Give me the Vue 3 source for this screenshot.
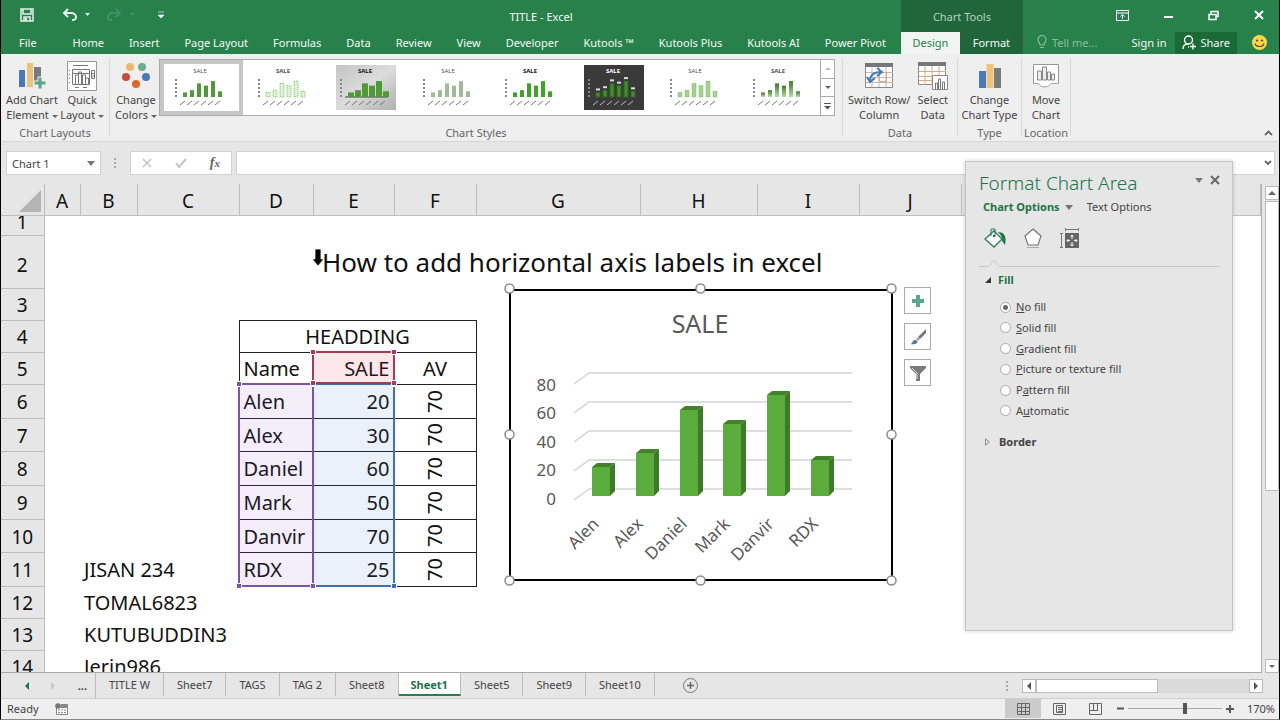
<script setup>
import { ref } from 'vue'

const menuTabs = ['File', 'Home', 'Insert', 'Page Layout', 'Formulas', 'Data', 'Review', 'View', 'Developer', 'Kutools ™', 'Kutools Plus', 'Kutools AI', 'Power Pivot']

const bars = [
  { name: 'Alen', value: 20 },
  { name: 'Alex', value: 30 },
  { name: 'Daniel', value: 60 },
  { name: 'Mark', value: 50 },
  { name: 'Danvir', value: 70 },
  { name: 'RDX', value: 25 }
]
const ticks = [80, 60, 40, 20, 0]

// chart geometry
const BASE = 496
const barX = (i) => Math.round(592 + i * 43.8)
const barY = (v) => Math.round(BASE - v * 1.44)
const tickY = (v) => Math.round(489 - v * 1.45)
const labelY = (v) => Math.round(505 - v * 1.43)

const styles = ['plain', 'hatch', 'gray', 'soft', 'bold', 'dark', 'pale', 'fade']
const selectedStyle = ref('plain')

const columns = ['A', 'B', 'C', 'D', 'E', 'F', 'G', 'H', 'I', 'J', '']
const extraRows = [
  { n: 12, text: 'TOMAL6823' },
  { n: 13, text: 'KUTUBUDDIN3' },
  { n: 14, text: 'Jerin986' }
]

const sheets = ['TITLE W', 'Sheet7', 'TAGS', 'TAG 2', 'Sheet8', 'Sheet1', 'Sheet5', 'Sheet9', 'Sheet10']
const activeSheet = ref('Sheet1')

const fills = [
  { id: 'none', pre: '', key: 'N', post: 'o fill' },
  { id: 'solid', pre: '', key: 'S', post: 'olid fill' },
  { id: 'gradient', pre: '', key: 'G', post: 'radient fill' },
  { id: 'picture', pre: '', key: 'P', post: 'icture or texture fill' },
  { id: 'pattern', pre: 'P', key: 'a', post: 'ttern fill' },
  { id: 'auto', pre: 'A', key: 'u', post: 'tomatic' }
]
const fill = ref('none')
const nameBox = ref('Chart 1')
const formula = ref('')
const zoom = ref(170)
</script>

<template>
  <div class="excel">
    <header class="top">
      <div class="title-row">
        <div class="quick">
          <button class="flat" aria-label="Save">
            <svg width="14" height="14" viewBox="0 0 14 14"><path d="M1 1h12v12H1zM3 1v5h8V1M4 13V9h6v4" fill="none" stroke="#e4f2e8" stroke-width="1.5" /><path d="M5 10h2v3H5z" fill="#e4f2e8" /></svg>
          </button>
          <button class="flat undo" aria-label="Undo">
            <svg width="28" height="14" viewBox="0 0 28 14"><path d="M6 1L2 5l4 4M2 5h7c3 0 5 2 5 4s-2 3-4 3" fill="none" stroke="#e4f2e8" stroke-width="2" /><path d="M23 5h5l-2.500 3z" fill="#e4f2e8" /></svg>
          </button>
          <button class="flat redo" aria-label="Redo">
            <svg width="28" height="14" viewBox="0 0 28 14"><path d="M9 1l4 4-4 4M13 5H6C3 5 1 7 1 9s2 3 4 3" fill="none" stroke="#439264" stroke-width="2" /><path d="M23 5h5l-2.500 3z" fill="#439264" /></svg>
          </button>
          <button class="flat" aria-label="Customize">
            <svg width="6" height="8" viewBox="0 0 6 8"><path d="M0 1h6M0 4h6L3 7z" fill="#fff" stroke="#fff" stroke-width="0.600" /></svg>
          </button>
        </div>
        <div class="doc-title">TITLE - Excel</div>
      </div>
      <div class="context-title">Chart Tools</div>
      <div class="window-buttons">
        <button class="flat" aria-label="Ribbon display">
          <svg width="13" height="11" viewBox="0 0 13 11"><path d="M.5.5h12v10H.5zM.5 3h12M6.500 9V5M4.500 6.500l2-2 2 2" fill="none" stroke="#fff" /></svg>
        </button>
        <button class="flat" aria-label="Minimize">
          <svg width="9" height="11" viewBox="0 0 9 11"><path d="M0 7h9" stroke="#fff" stroke-width="2" /></svg>
        </button>
        <button class="flat" aria-label="Restore">
          <svg width="11" height="11" viewBox="0 0 11 11"><path d="M1 4.500h7v5H1zM3 4V1.500h7v5H8" fill="none" stroke="#fff" stroke-width="1.500" /></svg>
        </button>
        <button class="flat" aria-label="Close">
          <svg width="10" height="10" viewBox="0 0 10 10"><path d="M1 1l8 8M9 1L1 9" stroke="#fff" stroke-width="2" /></svg>
        </button>
      </div>
      <nav class="tabs">
        <button v-for="t in menuTabs" :key="t" class="tab">{{ t }}</button>
      </nav>
      <div class="context-tabs">
        <button class="tab design">Design</button>
        <button class="tab format">Format</button>
      </div>
      <div class="account">
        <button class="flat tell">
          <svg width="10" height="14" viewBox="0 0 10 14"><path d="M3 10C3 8 1 7 1 4.500a4 4 0 018 0C9 7 7 8 7 10zM3 12.500h4" fill="none" stroke="#85c09b" stroke-width="1.200" /></svg>
          Tell me...
        </button>
        <button class="flat sign">Sign in</button>
        <button class="flat share">
          <svg width="14" height="15" viewBox="0 0 14 15"><circle cx="6.500" cy="5" r="4" fill="none" stroke="#fff" stroke-width="1.400" /><path d="M1 14c0-3 2-5 5-5M6 12h1M8 11.500h6M11 8.500v6" fill="none" stroke="#fff" stroke-width="1.400" /></svg>
          Share
        </button>
        <button class="flat smile" aria-label="Feedback">
          <svg width="15" height="15" viewBox="0 0 15 15"><circle cx="7.500" cy="7.500" r="7.500" fill="#fbd849" /><circle cx="5" cy="5.500" r="1.100" fill="#5b4a17" /><circle cx="10" cy="5.500" r="1.100" fill="#5b4a17" /><path d="M3 8.500c1 4 8 4 9 0" fill="none" stroke="#5b4a17" stroke-width="1.200" /></svg>
        </button>
      </div>
    </header>

    <section class="ribbon">
      <div class="group layouts">
        <div class="tools">
          <button class="tool">
            <svg width="28" height="28" viewBox="0 0 28 28"><path d="M1 8h6v17H1z" fill="#4a7ab5" /><path d="M9 1h6v24H9z" fill="#ebc47a" /><path d="M16 5h7v15h-7z" fill="#7b7b7b" /><path d="M20 15h4v4h4v4h-4v4h-4v-4h-4v-4h4z" fill="#5ba58c" stroke="#efefef" /></svg>
            <span>Add Chart<br>Element <i class="caret"></i></span>
          </button>
          <button class="tool">
            <svg width="30" height="30" viewBox="0 0 30 30"><path d="M.5.5h29v29H.5z" fill="#fff" stroke="#999" /><path d="M6 4.500h15M5.500 8.500h17v15h-17zM5.500 12.500h17M8.500 23V14h3v9M11.500 23V11h3v12M15.500 23v-9h3v9M18.500 23v-6h3v6M24.500 9.500h3v8h-3zM24.500 12.500h3M24.500 15h3M8 26.500h4M16 26.500h4" fill="none" stroke="#777" /><path d="M2.500 9v16" stroke="#777" stroke-dasharray="1 3" /></svg>
            <span>Quick<br>Layout <i class="caret"></i></span>
          </button>
        </div>
        <div class="group-name">Chart Layouts</div>
      </div>

      <div class="group chart-styles">
        <div class="tools">
          <button class="tool colors">
            <svg width="28" height="28" viewBox="0 0 28 28"><circle cx="8" cy="5" r="4" fill="#ebb86c" /><circle cx="20" cy="5" r="4" fill="#6bab90" /><circle cx="4" cy="15" r="4" fill="#c8483b" /><circle cx="24" cy="15" r="4" fill="#4a7ab5" /><circle cx="14" cy="22" r="4" fill="#d9682a" /></svg>
            <span>Change<br>Colors <i class="caret"></i></span>
          </button>
          <div class="gallery">
            <button v-for="s in styles" :key="s" class="thumb" :class="[s, { selected: s === selectedStyle }]" :aria-label="'Style ' + s" @click="selectedStyle = s">
              <svg width="60" height="45" viewBox="0 0 60 45">
                <defs>
                  <linearGradient id="fade-bar" x1="0" y1="0" x2="0" y2="1"><stop offset="0" stop-color="#3d7a2b" /><stop offset="1" stop-color="#b5dca6" /></linearGradient>
                  <linearGradient id="gray-paper" x1="0" y1="0" x2="1" y2="1"><stop offset="0" stop-color="#c4c4c4" /><stop offset="0.500" stop-color="#dcdcdc" /><stop offset="1" stop-color="#b0b0b0" /></linearGradient>
                </defs>
                <rect class="paper" width="60" height="45" />
                <text x="29" y="8" text-anchor="middle">SALE</text>
                <path class="axis" d="M5 14v20" />
                <path v-if="s === 'gray'" d="M9 32h43" stroke="#444" />
                <g v-for="(b, i) in bars" :key="b.name">
                  <rect class="bar" :x="12 + i * 7" :y="32 - b.value / 4.4" width="4" :height="b.value / 4.4" />
                  <path v-if="s === 'dark'" :d="`M${12 + i * 7} ${29 - b.value / 4.4}h4`" stroke="#ddd" stroke-width="2" />
                  <path class="cat" :d="`M${9 + i * 7} 40l5-4`" />
                </g>
              </svg>
            </button>
            <div class="gallery-nav">
              <button aria-label="Previous styles"><i class="up"></i></button>
              <button aria-label="Next styles"><i class="caret"></i></button>
              <button aria-label="More styles"><svg width="7" height="7" viewBox="0 0 7 7"><path d="M0 .5h7" stroke="#555" /><path d="M0 3h7L3.500 6.500z" fill="#555" /></svg></button>
            </div>
          </div>
        </div>
        <div class="group-name">Chart Styles</div>
      </div>

      <div class="group data">
        <div class="tools">
          <button class="tool">
            <svg width="28" height="26" viewBox="0 0 28 26"><path d="M.5.5h27v24H.5z" fill="#fff" stroke="#8a8a8a" /><path d="M0 0h28v4H0z" fill="#777" /><path d="M7 4v20M14 4v20M21 4v20M1 9.500h27M1 14.500h27M1 19.500h27" stroke="#bbb" /><path d="M14.500 9.500h7v9h-7z" fill="none" stroke="#e9a46a" /><path d="M5 18c0-6 4-9 11-9M12 5l5 4-5 4M2 14l3 5 5-4" fill="none" stroke="#4a7ab5" stroke-width="2" /></svg>
            <span>Switch Row/<br>Column</span>
          </button>
          <button class="tool">
            <svg width="30" height="28" viewBox="0 0 30 28"><path d="M.5.500h27v22H.5z" fill="#fff" stroke="#8a8a8a" /><path d="M0 0h28v4H0z" fill="#777" /><path d="M7 4v19M14 4v19M21 4v19M1 9.500h27M1 14.500h27M1 18.500h27" stroke="#e0a87c" /><path d="M14.500 13.500h15v14h-15z" fill="#fff" stroke="#888" /><path d="M17.500 27v-6h2v6M20.500 27V17h2v10M24.500 27v-7h2v7" fill="none" stroke="#777" /></svg>
            <span>Select<br>Data</span>
          </button>
        </div>
        <div class="group-name">Data</div>
      </div>

      <div class="group type">
        <div class="tools">
          <button class="tool">
            <svg width="22" height="26" viewBox="0 0 22 26"><path d="M0 8h7v17H0z" fill="#4a7ab5" /><path d="M7.500 1h7v24h-7z" fill="#ebc47a" /><path d="M15 5h7v20h-7z" fill="#7b7b7b" /></svg>
            <span>Change<br>Chart Type</span>
          </button>
        </div>
        <div class="group-name">Type</div>
      </div>

      <div class="group location">
        <div class="tools">
          <button class="tool">
            <svg width="26" height="26" viewBox="0 0 26 26"><path d="M.5 1.500h25v22H.5z" fill="#fff" stroke="#999" /><path d="M4.500 17V8h4v9zM9.500 17V4h4v13zM14.500 17V9h3v8zM18.500 17v-6h3v6z" fill="#eee" stroke="#888" /><path d="M0 21h6c2 3 5 3 8 2l4-3h8v6H0z" fill="#efefef" /><path d="M0 20.500h6c0 3 5 4 9 3l3-3h8" fill="none" stroke="#aaa" /></svg>
            <span>Move<br>Chart</span>
          </button>
        </div>
        <div class="group-name">Location</div>
      </div>
      <button class="flat collapse" aria-label="Collapse ribbon">
        <svg width="9" height="6" viewBox="0 0 9 6"><path d="M1 5l3.500-3.500L8 5" fill="none" stroke="#666" stroke-width="1.800" /></svg>
      </button>
    </section>

    <section class="formula-bar">
      <div class="name-box">
        <input v-model="nameBox" aria-label="Name box">
        <button class="flat" aria-label="Names"><i class="caret big"></i></button>
      </div>
      <span class="grip"></span>
      <div class="fx-box">
        <button class="flat" aria-label="Cancel"><svg width="10" height="10" viewBox="0 0 10 10"><path d="M1 1l8 8M9 1L1 9" stroke="#c4c4c4" stroke-width="1.500" /></svg></button>
        <button class="flat" aria-label="Enter"><svg width="12" height="10" viewBox="0 0 12 10"><path d="M1 5l3 4 7-8" fill="none" stroke="#c4c4c4" stroke-width="2" /></svg></button>
        <button class="flat fx" aria-label="Insert function">f<small>x</small></button>
      </div>
      <div class="formula-input">
        <input v-model="formula" aria-label="Formula">
        <button class="flat" aria-label="Expand"><svg width="8" height="6" viewBox="0 0 8 6"><path d="M1 1l3 3 3-3" fill="none" stroke="#666" stroke-width="1.800" /></svg></button>
      </div>
    </section>

    <main class="work">
      <div class="sheet">
        <table class="cells">
          <colgroup>
            <col class="w-head"><col class="w-a"><col class="w-b"><col class="w-c"><col class="w-d"><col class="w-e"><col class="w-f"><col class="w-g"><col class="w-h"><col class="w-c"><col class="w-c"><col>
          </colgroup>
          <thead>
            <tr>
              <th class="corner"><i></i></th>
              <th v-for="c in columns" :key="c">{{ c }}</th>
            </tr>
          </thead>
          <tbody>
            <tr class="r1"><th><div class="cut">1</div></th><td colspan="11"></td></tr>
            <tr class="r2"><th>2</th><td colspan="4"></td><td colspan="7" class="heading">How to add horizontal axis labels in excel</td></tr>
            <tr><th>3</th><td colspan="11"></td></tr>
            <tr><th>4</th><td colspan="3"></td><td colspan="3" class="box mid">HEADDING</td><td colspan="5"></td></tr>
            <tr><th>5</th><td colspan="3"></td><td class="box">Name</td><td class="box num">SALE</td><td class="box mid">AV</td><td colspan="5"></td></tr>
            <tr v-for="(b, i) in bars" :key="b.name" :class="i % 3 === 1 ? 'mid-tall' : 'tall'">
              <th>{{ i + 6 }}</th>
              <td></td>
              <td colspan="2">{{ i === 5 ? 'JISAN 234' : '' }}</td>
              <td class="box">{{ b.name }}</td>
              <td class="box num">{{ b.value }}</td>
              <td class="box turned-cell"><span class="turned">70</span></td>
              <td colspan="5"></td>
            </tr>
            <tr v-for="r in extraRows" :key="r.n"><th>{{ r.n }}</th><td></td><td colspan="10">{{ r.text }}</td></tr>
          </tbody>
        </table>

        <div class="range values"><i></i><i></i><i></i><i></i></div>
        <div class="range names"><i></i><i></i><i></i><i></i></div>
        <div class="range series"><i></i><i></i><i></i><i></i></div>

        <svg class="chart" width="396" height="304" viewBox="503 283 396 304">
          <rect x="510" y="290" width="382" height="290" fill="#fff" stroke="#000" stroke-width="2" />
          <text class="chart-title" x="700" y="333" text-anchor="middle">SALE</text>
          <g v-for="t in ticks" :key="t">
            <path :d="`M574 ${tickY(t) + 11}L589 ${tickY(t)}H852`" fill="none" stroke="#d4d4d4" stroke-width="1.500" />
            <text x="556" :y="labelY(t)" text-anchor="end">{{ t }}</text>
          </g>
          <g v-for="(b, i) in bars" :key="b.name">
            <path :d="`M${barX(i)} ${barY(b.value)}l5-4h18l-5 4z`" fill="#43812c" />
            <path :d="`M${barX(i) + 18} ${barY(b.value)}l5-4V${BASE - 5}l-5 5z`" fill="#3e7a28" />
            <rect :x="barX(i)" :y="barY(b.value)" width="18" :height="BASE - barY(b.value)" fill="#5aad3c" />
            <text text-anchor="end" :transform="`translate(${barX(i) + 8} 525) rotate(-45)`">{{ b.name }}</text>
          </g>
          <g fill="#fff" stroke="#8b8b8b" stroke-width="1.500">
            <circle cx="509.500" cy="288.500" r="4.500" /><circle cx="700.500" cy="288.500" r="4.500" /><circle cx="891.500" cy="288.500" r="4.500" />
            <circle cx="509.500" cy="434.500" r="4.500" /><circle cx="891.500" cy="434.500" r="4.500" />
            <circle cx="509.500" cy="580.500" r="4.500" /><circle cx="700.500" cy="580.500" r="4.500" /><circle cx="891.500" cy="580.500" r="4.500" />
          </g>
        </svg>

        <div class="chart-buttons">
          <button aria-label="Chart elements"><svg width="14" height="14" viewBox="0 0 14 14"><path d="M5 1h4v4h4v4H9v4H5V9H1V5h4z" fill="#5ba58c" /></svg></button>
          <button aria-label="Chart styles"><svg width="18" height="18" viewBox="0 0 18 18"><path d="M17 1v4l-6 6-2-2z" fill="#777" /><path d="M9 9l2 2-2 2-2-2z" fill="#aaa" /><path d="M1 16c3 0 2-4 5-4 2 0 3 2 2 3-2 2-5 1-7 1z" fill="#4a7ab5" /></svg></button>
          <button aria-label="Chart filters"><svg width="18" height="18" viewBox="0 0 18 18"><path d="M1 2h16v2l-6 6v7H7v-7L1 4z" fill="#7b7b7b" /><path d="M3 4l5 5v6" fill="none" stroke="#ddd" /></svg></button>
        </div>

        <svg class="pointer" width="14" height="20" viewBox="0 0 14 20"><path d="M4 1h6v10h3l-6 7-6-7h3z" fill="#000" stroke="#fff" stroke-width="0.800" /></svg>
      </div>

      <div class="vscroll">
        <button aria-label="Scroll up"><i class="up dark"></i></button>
        <div class="vthumb"></div>
        <button class="end" aria-label="Scroll down"><i class="caret"></i></button>
      </div>
    </main>

    <section class="sheet-bar">
      <div class="sheet-nav">
        <button class="flat" aria-label="Previous sheet"><i class="left"></i></button>
        <button class="flat" aria-label="Next sheet"><i class="right faint"></i></button>
        <button class="flat dots">...</button>
      </div>
      <div class="sheet-tabs">
        <button v-for="s in sheets" :key="s" class="sheet-tab" :class="{ active: s === activeSheet }" @click="activeSheet = s">{{ s }}</button>
      </div>
      <button class="flat add" aria-label="New sheet">
        <svg width="15" height="15" viewBox="0 0 15 15"><circle cx="7.500" cy="7.500" r="7" fill="none" stroke="#777" /><path d="M7.500 4v7M4 7.500h7" stroke="#666" stroke-width="1.500" /></svg>
      </button>
      <span class="grip"></span>
      <div class="hscroll">
        <button aria-label="Scroll left"><i class="left gray"></i></button>
        <div class="hthumb"></div>
        <button class="end" aria-label="Scroll right"><i class="right gray"></i></button>
      </div>
    </section>

    <footer class="status">
      <span>Ready</span>
      <button class="flat macro" aria-label="Record macro">
        <svg width="13" height="12" viewBox="0 0 13 12"><path d="M1.500 4.500h11v7h-11z" fill="#fff" stroke="#888" /><path d="M6 1h7v3H6z" fill="#888" /><circle cx="3" cy="3" r="2.800" fill="#777" /><path d="M3 7h8M3 9.500h8" stroke="#888" stroke-dasharray="2 1" /></svg>
      </button>
      <div class="views">
        <button class="on" aria-label="Normal"><svg width="13" height="12" viewBox="0 0 13 12"><path d="M.5.500h12v11H.500zM4.500 0v12M8.500 0v12M0 4.500h13M0 8.500h13" fill="none" stroke="#666" /></svg></button>
        <button aria-label="Page layout"><svg width="13" height="12" viewBox="0 0 13 12"><path d="M.5.500h12v11H.500zM3.500 2.500h6v7h-6zM5 4.500h4M5 6.500h4M5 8.500h4" fill="none" stroke="#666" /></svg></button>
        <button aria-label="Page break"><svg width="13" height="12" viewBox="0 0 13 12"><path d="M.5.500h12v11H.500zM4.500 0v7M8.500 0v7M0 7.500h9" fill="none" stroke="#666" /></svg></button>
      </div>
      <button class="flat" aria-label="Zoom out"><svg width="7" height="7" viewBox="0 0 7 7"><path d="M0 3.500h7" stroke="#555" stroke-width="2" /></svg></button>
      <input v-model="zoom" class="zoom" type="range" min="0" max="276" aria-label="Zoom">
      <button class="flat" aria-label="Zoom in"><svg width="8" height="8" viewBox="0 0 8 8"><path d="M0 4h8M4 0v8" stroke="#555" stroke-width="2" /></svg></button>
      <span class="percent">{{ zoom }}%</span>
    </footer>

    <aside class="pane">
      <div class="pane-head">
        <h2>Format Chart Area</h2>
        <button class="flat" aria-label="Pane options"><i class="caret big"></i></button>
        <button class="flat" aria-label="Close pane"><svg width="10" height="10" viewBox="0 0 10 10"><path d="M1 1l8 8M9 1L1 9" stroke="#666" stroke-width="2" /></svg></button>
      </div>
      <div class="pane-tabs">
        <button class="flat chosen">Chart Options <i class="caret big"></i></button>
        <button class="flat">Text Options</button>
      </div>
      <div class="pane-icons">
        <button class="flat" aria-label="Fill and line"><svg width="24" height="22" viewBox="0 0 24 22"><path d="M1 12l9-8 8 8-8 8z" fill="#fff" stroke="#2a7f56" stroke-width="1.300" /><path d="M7 9V2h4v8" fill="none" stroke="#2a7f56" /><circle cx="10" cy="9" r="1.300" fill="#2a7f56" /><path d="M14 5c6 0 9 4 7 13l-3-4c1-3-1-6-4-9z" fill="#217346" /></svg></button>
        <button class="flat" aria-label="Effects"><svg width="22" height="22" viewBox="0 0 22 22"><path d="M11 2l8 7-3 9H6L3 9z" fill="#fff" stroke="#777" stroke-width="1.200" /><path d="M5 20.500h12" stroke="#aaa" /></svg></button>
        <button class="flat" aria-label="Size and properties"><svg width="22" height="22" viewBox="0 0 22 22"><path d="M7 6h14v15H7z" fill="#666" /><path d="M14 8v4M14 15v4M9 13.500h3M16 13.500h3M12.500 9.500L14 8l1.500 1.500M12.500 17.500L14 19l1.500-1.500M10.500 12L9 13.500l1.500 1.500M17.500 12l1.500 1.500-1.500 1.500" fill="none" stroke="#fff" /><path d="M7 2.500h14M7.500 1v3M20.500 1v3M3.500 6v15M2 6.500h3M2 20.500h3" stroke="#777" /></svg></button>
      </div>
      <svg class="notch" viewBox="0 0 241 10" preserveAspectRatio="none"><path d="M0 9.500h10l5-6 5 6h221" fill="none" stroke="#c8c8c8" /></svg>
      <h3 class="open"><i class="fold"></i>Fill</h3>
      <div class="fills">
        <label v-for="f in fills" :key="f.id">
          <input v-model="fill" type="radio" name="fill" :value="f.id">
          <span>{{ f.pre }}<u>{{ f.key }}</u>{{ f.post }}</span>
        </label>
      </div>
      <h3 class="border-head"><svg width="5" height="8" viewBox="0 0 5 8"><path d="M.5.800L4.300 4 .5 7.200z" fill="none" stroke="#888" /></svg>Border</h3>
    </aside>
  </div>
</template>

<style>
body {
  margin: 0;
  overflow: hidden;
}
</style>

<style scoped>
* {
  box-sizing: border-box;
}

.excel {
  position: relative;
  display: flex;
  flex-direction: column;
  height: 100vh;
  background: #e6e6e6;
  border: 1px solid #000;
  border-width: 0 1px 1px;
  border-bottom-color: #888;
  font-family: "Noto Sans", "Open Sans", sans-serif;
  font-size: 11px;
  color: #444;
}

button,
input {
  font: inherit;
  color: inherit;
}

button {
  padding: 0;
  border: 0;
  background: none;
  white-space: nowrap;
}

svg {
  display: block;
}

.flat {
  display: flex;
  align-items: center;
}

/* green header */
.top {
  display: grid;
  grid-template-columns: auto 122px 1fr;
  grid-template-rows: 32px 22px;
  background: #28804a;
  color: #f4fbf6;
}

.title-row,
.quick,
.tabs,
.account,
.window-buttons {
  display: flex;
  align-items: center;
}

.quick {
  width: 180px;
  padding: 0 17px 2px 19px;
}

.undo {
  margin-left: 28px;
}

.redo {
  margin: 0 23px 0 17px;
}

.doc-title {
  flex: 1;
  text-align: center;
}

.context-title {
  display: flex;
  align-items: center;
  justify-content: center;
  background: #21663a;
  color: #b5d3bf;
}

.window-buttons {
  justify-content: flex-end;
  gap: 35px;
  padding: 0 15px 2px 0;
}

.tabs {
  padding: 0 2px 0 6px;
}

.tab {
  height: 22px;
  padding: 0 13px 2px 12px;
}

.tabs .tab:first-child {
  margin-right: 11px;
}

.context-tabs {
  display: flex;
  background: #21663a;
}

.context-tabs .tab {
  padding: 0 0 2px;
}

.design {
  width: 59px;
  background: #f1f5f1;
  color: #28804a;
}

.format {
  flex: 1;
}

.account .flat {
  padding-bottom: 2px;
}

.tell {
  gap: 5px;
  margin-left: 14px;
  color: #85c09b;
}

.sign {
  margin-left: auto;
}

.account .share {
  height: 22px;
  gap: 4px;
  margin-left: 9px;
  padding: 0 7px 2px;
  background: #1a6a38;
}

.smile {
  margin: 0 12px 0 15px;
}

/* ribbon */
.ribbon {
  display: flex;
  height: 88px;
  padding-top: 4px;
  background: #efefef;
  border-bottom: 1px solid #d8d8d8;
}

.group {
  display: flex;
  flex-direction: column;
  height: 78px;
  border-right: 1px solid #d8d8d8;
}

.tools {
  display: flex;
  flex: 1;
}

.group-name {
  text-align: center;
  line-height: 14px;
  color: #666;
  margin-bottom: -4px;
}

.tool {
  display: flex;
  flex-direction: column;
  align-items: center;
  justify-content: flex-start;
  line-height: 15px;
}

.tool svg {
  height: 30px;
  margin: 3px 0 1px;
}

.layouts {
  width: 109px;
}

.layouts .tools {
  justify-content: space-between;
  padding: 0 5px;
}

.chart-styles {
  width: 733px;
}

.colors {
  width: 49px;
  padding-left: 3px;
}

.data {
  width: 115px;
}

.data .tools {
  justify-content: space-between;
  padding: 0 9px 0 5px;
}

.type {
  width: 64px;
}

.location {
  width: 49px;
}

.type .tools,
.location .tools {
  justify-content: center;
}

.collapse {
  margin: auto 6px 5px auto;
}

.caret,
.up {
  display: inline-block;
  vertical-align: middle;
  border: 3px solid transparent;
  border-top-color: #666;
  border-bottom: 0;
}

.big {
  border-width: 5px 4px 0;
  border-top-color: #777;
}

.up {
  border-top: 0;
  border-bottom: 3px solid #bbb;
}

.up.dark {
  border-bottom: 4px solid #666;
  border-left-width: 4px;
  border-right-width: 4px;
}

.gallery {
  display: flex;
  flex: 1;
  height: 57px;
  margin: 1px 7px 0 0;
  background: #fff;
  border: 1px solid #ababab;
}

.thumb {
  display: flex;
  flex: 1 1 0;
  width: 0;
  min-width: 0;
  align-items: center;
  justify-content: center;
}

.thumb.selected {
  box-shadow: inset 0 0 0 4px #c6c6c6;
}

.thumb text {
  font-size: 6px;
  font-weight: bold;
  fill: #555;
}

.paper {
  fill: #fff;
}

.bar {
  fill: #4f9a35;
}

.axis {
  stroke: #888;
  stroke-width: 2;
  stroke-dasharray: 2 2;
}

.cat {
  stroke: #777;
  stroke-width: 1;
}

.hatch .bar {
  fill: #dff2d8;
  stroke: #74c05a;
  stroke-dasharray: 1 1;
}

.gray .paper {
  fill: url(#gray-paper);
}

.gray .bar {
  width: 6px;
}

.gray text,
.bold text {
  fill: #111;
}

.soft .bar {
  fill: #9dbb95;
}

.soft text,
.pale text,
.plain text {
  font-weight: normal;
}

.bold .bar {
  fill: #3fa32a;
}

.dark .paper {
  fill: #3a3a3a;
}

.dark text {
  fill: #fff;
}

.dark .bar {
  fill: #3f8f2b;
  stroke: #2c6420;
}

.dark .cat {
  stroke: #bbb;
}

.pale .bar {
  fill: #a5d08f;
  stroke: #8ab877;
  stroke-width: 0.5;
}

.fade .bar {
  fill: url(#fade-bar);
}

.gallery-nav {
  display: flex;
  flex-direction: column;
  width: 14px;
  border-left: 1px solid #ababab;
}

.gallery-nav button {
  display: flex;
  flex: 1;
  align-items: center;
  justify-content: center;
}

.gallery-nav button + button {
  border-top: 1px solid #ababab;
}

/* formula bar */
.formula-bar {
  display: flex;
  align-items: center;
  height: 42px;
  padding: 0 4px 0 5px;
}

.name-box,
.fx-box,
.formula-input {
  display: flex;
  align-items: center;
  height: 24px;
  background: #fff;
  border: 1px solid #d2d2d2;
}

.name-box input,
.formula-input input {
  flex: 1;
  min-width: 0;
  border: 0;
  padding: 0 0 0 5px;
  background: none;
  outline: none;
}

.name-box {
  width: 95px;
  padding-right: 5px;
}

.grip {
  width: 2px;
  height: 10px;
  margin: 0 14px 0 13px;
  background: repeating-linear-gradient(#aaa 0 2px, transparent 2px 4px);
}

.fx-box {
  justify-content: space-between;
  width: 102px;
  padding: 0 11px;
}

.fx {
  font: italic bold 14px "Liberation Serif", serif;
  color: #666;
}

.fx small {
  font-size: 11px;
}

.formula-input {
  flex: 1;
  margin-left: 4px;
  padding-right: 2px;
}

/* sheet */
.work {
  display: flex;
  flex: 1;
  min-height: 0;
}

.sheet {
  position: relative;
  flex: 1;
  overflow: hidden;
  background: #fff;
  border-right: 1px solid #b0b0b0;
  border-bottom: 1px solid #a8a8a8;
}

.cells {
  width: 100%;
  table-layout: fixed;
  border-collapse: collapse;
  font-size: 20px;
  line-height: 24px;
  color: #111;
}

.w-head { width: 43px; }
.w-a { width: 36px; }
.w-b { width: 57px; }
.w-c { width: 102px; }
.w-d { width: 74px; }
.w-e { width: 81px; }
.w-f { width: 82px; }
.w-g { width: 164px; }
.w-h { width: 117px; }

.cells th {
  padding: 2px 0 0;
  background: #e6e6e6;
  border: 1px solid #bdbdbd;
  font-size: 19px;
  font-weight: normal;
}

.cells thead tr {
  height: 31px;
}

.cells thead th {
  padding-top: 4px;
  border-top: 0;
}

.cells tbody th {
  border-left: 0;
}

.cells tbody tr {
  height: 32px;
}

.cells tbody .r1 {
  height: 20px;
}

.cells tbody .r2 {
  height: 53px;
}

.r2 th {
  padding-top: 6px;
}

.r1 th {
  padding: 0;
}

.cells tbody .tall {
  height: 34px;
}

.cells tbody .mid-tall {
  height: 33px;
}

.cells .corner {
  padding: 0;
  border-left: 0;
  text-align: right;
  vertical-align: bottom;
  line-height: 0;
}

.corner i {
  display: inline-block;
  margin: 0 3px 3px 0;
  border: 11px solid #b4b4b4;
  border-top-color: transparent;
  border-left-color: transparent;
}

.cut {
  display: flex;
  align-items: flex-end;
  justify-content: center;
  height: 18px;
  overflow: hidden;
}

.cells td {
  padding: 2px 4px 0;
  white-space: nowrap;
}

.cells .box {
  border: 1px solid #222;
}

.cells .heading {
  padding: 0 0 0 9px;
  font-size: 26px;
}

.mid {
  text-align: center;
}

.num {
  text-align: right;
}

.cells .turned-cell {
  padding: 0 4px 2px;
  text-align: center;
}

.turned {
  display: inline-block;
  writing-mode: vertical-rl;
  rotate: 180deg;
  vertical-align: middle;
}

.range {
  position: absolute;
  border: 2px solid;
}

.range i {
  position: absolute;
  width: 6px;
  height: 6px;
  background: currentColor;
  border: 1px solid #fff;
}

.range i:nth-child(odd) { left: -4px; }
.range i:nth-child(even) { right: -4px; }
.range i:nth-child(-n+2) { top: -4px; }
.range i:nth-child(n+3) { bottom: -4px; }

.names {
  left: 237px;
  top: 199px;
  width: 76px;
  height: 204px;
  color: #7a54a6;
  background: rgba(150, 90, 210, 0.1);
}

.values {
  left: 311px;
  top: 199px;
  width: 83px;
  height: 204px;
  color: #3f6fb5;
  background: rgba(60, 120, 210, 0.1);
}

.series {
  left: 311px;
  top: 167px;
  width: 83px;
  height: 33px;
  color: #a83a55;
  background: rgba(220, 60, 70, 0.12);
}

.chart {
  position: absolute;
  left: 502px;
  top: 99px;
  font-size: 17px;
}

.chart text {
  fill: #595959;
}

.chart .chart-title {
  font-size: 25px;
}

.chart-buttons {
  position: absolute;
  left: 903px;
  top: 103px;
  display: flex;
  flex-direction: column;
  gap: 9px;
}

.chart-buttons button {
  display: flex;
  align-items: center;
  justify-content: center;
  width: 27px;
  height: 27px;
  background: #fff;
  border: 1px solid #ababab;
}

.pointer {
  position: absolute;
  left: 310px;
  top: 64px;
}

.vscroll {
  display: flex;
  flex-direction: column;
  width: 17px;
  padding: 2px 0 0 3px;
  background: #e6e6e6;
}

.vscroll button,
.hscroll button {
  display: flex;
  align-items: center;
  justify-content: center;
  width: 14px;
  height: 14px;
  background: #fff;
  border: 1px solid #bbb;
}

.vthumb {
  flex: 0 0 290px;
  margin-top: 1px;
  background: #fff;
  border: 1px solid #bbb;
}

.vscroll .end {
  margin-top: auto;
}

/* sheet tabs */
.sheet-bar {
  display: flex;
  align-items: center;
  height: 26px;
  border-bottom: 1px solid #cfcfcf;
}

.sheet-nav {
  display: flex;
  align-items: center;
  justify-content: space-between;
  width: 94px;
  padding: 0 8px 0 24px;
}

.dots {
  font-weight: bold;
}

.left,
.right {
  border: 4px solid transparent;
  border-right-color: #217346;
  border-left: 0;
}

.right {
  border-left: 4px solid #217346;
  border-right: 0;
}

.left.gray { border-right-color: #555; }
.right.gray { border-left-color: #555; }
.right.faint { border-left-color: #c8c8c8; }

.sheet-tabs {
  display: flex;
  align-items: flex-start;
  height: 25px;
  border-left: 1px solid #bbb;
}

.sheet-tab {
  height: 23px;
  padding: 0 13px;
  border-right: 1px solid #bbb;
}

.sheet-tab.active {
  padding: 2px 12px 0;
  background: #fff;
  color: #217346;
  font-weight: bold;
  border-bottom: 2px solid #28804a;
}

.add {
  margin: 0 auto 0 28px;
}

.hscroll {
  display: flex;
  width: 241px;
  margin-right: 16px;
  background: #dadada;
}

.hthumb {
  width: 122px;
  background: #fff;
  border: 1px solid #bbb;
}

.hscroll .end {
  margin-left: auto;
}

/* status */
.status {
  display: flex;
  align-items: center;
  height: 20px;
  padding: 0 0 1px 6px;
  background: #efefef;
}

.macro {
  margin-left: 16px;
}

.views {
  display: flex;
  margin: 0 4px 0 auto;
}

.views button {
  display: flex;
  align-items: center;
  justify-content: center;
  width: 36px;
  height: 19px;
}

.views .on {
  background: #cbcbcb;
}

.zoom {
  appearance: none;
  width: 94px;
  height: 12px;
  margin: 0 4px;
  background: linear-gradient(#aaa, #aaa) center / 100% 1px no-repeat;
}

.zoom::-webkit-slider-thumb {
  appearance: none;
  width: 4px;
  height: 11px;
  background: #555;
}

.percent {
  width: 45px;
  padding-right: 4px;
  text-align: right;
}

/* format pane */
.pane {
  position: absolute;
  top: 161px;
  right: 46px;
  width: 268px;
  height: 470px;
  padding: 8px 12px 0 13px;
  background: #e6e6e6;
  border: 1px solid #c6c6c6;
  box-shadow: 0 0 4px rgba(0, 0, 0, 0.2);
}

.pane-head {
  display: flex;
  align-items: center;
  gap: 7px;
}

.pane h2 {
  flex: 1;
  margin: 0;
  font-size: 19px;
  font-weight: 300;
  line-height: 26px;
  color: #217346;
  white-space: nowrap;
}

.pane-head .flat {
  margin-bottom: 6px;
}

.pane-tabs {
  display: flex;
  gap: 14px;
  margin: 3px 0 0 4px;
  line-height: 16px;
}

.chosen {
  gap: 5px;
  font-weight: bold;
  color: #217346;
}

.pane-icons {
  display: flex;
  gap: 14px;
  margin: 12px 0 0 5px;
}

.notch {
  width: 100%;
  height: 10px;
  margin-top: 8px;
}

.pane h3 {
  display: flex;
  align-items: center;
  gap: 9px;
  margin: 5px 0 0 6px;
  font-size: 11px;
  line-height: 16px;
}

.pane .open {
  gap: 7px;
  color: #217346;
}

.fold {
  border: 3px solid #333;
  border-top-color: transparent;
  border-left-color: transparent;
}

.fills {
  display: flex;
  flex-direction: column;
  justify-content: space-between;
  height: 120px;
  margin: 11px 0 0 21px;
}

.fills label {
  display: flex;
  align-items: center;
  gap: 5px;
  line-height: 16px;
}

.fills input {
  appearance: none;
  width: 11px;
  height: 11px;
  margin: 0;
  background: #fff;
  border: 1px solid #aaa;
  border-radius: 50%;
}

.fills input:checked {
  background: radial-gradient(circle, #666 0 2px, #fff 3px);
}

.pane .border-head {
  margin-top: 15px;
}
</style>
